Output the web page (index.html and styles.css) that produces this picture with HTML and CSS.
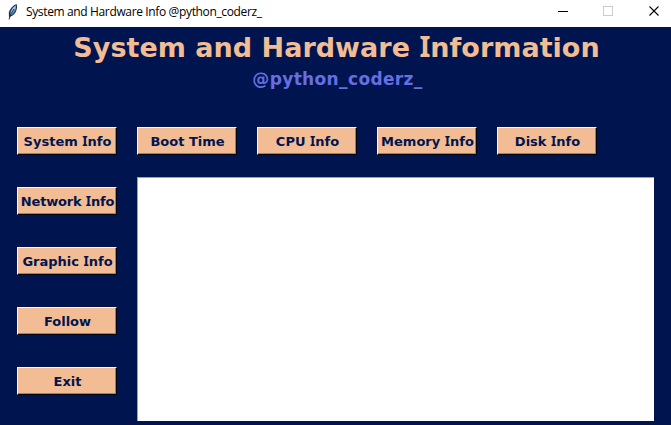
FILE: index.html
```html
<!DOCTYPE html>
<html lang="en">
<head>
<meta charset="utf-8">
<title>System and Hardware Info</title>
<link rel="stylesheet" href="styles.css">
</head>
<body>
<div class="window">
  <header class="titlebar">
    <svg class="feather" width="12" height="18" viewBox="0 0 12 18">
      <path d="M2 14.500 L1.800 9.500 Q4 3 9.500 1 Q10.800 4 9 8.500 Q7 12.500 3.500 13.500 Z" fill="#27303f"/>
      <path d="M3 12 Q3.500 5.500 9 2 Q9.600 6 7.500 9 L5 12 Z" fill="#4a8fd2"/>
      <path d="M3.500 10 Q4.500 5.500 8.500 2.800 L8.500 5 Q6.500 8 4.500 10.500 Z" fill="#9ccaf4"/>
      <path d="M2 16.500 Q3 11 7 6" fill="none" stroke="#17202e" stroke-width=".9"/>
    </svg>
    <span class="caption">System and Hardware Info @python_coderz_</span>
    <svg class="controls" width="113" height="11" viewBox="0 0 113 11" shape-rendering="crispEdges">
      <path d="M0 5.500H10" stroke="#000"/>
      <rect x="45.500" y=".5" width="9" height="9" fill="none" stroke="#ccc"/>
      <path d="M91.500 .5L100.500 9.500M100.500 .5L91.500 9.500" stroke="#000" stroke-width="1.100" shape-rendering="auto"/>
    </svg>
  </header>
  <main class="client">
    <h1 class="heading">System and Hardware <span class="cap-i">I</span>nformation</h1>
    <p class="handle">@python_coderz_</p>
    <div class="grid">
      <button class="btn">System <span class="cap-i">I</span>nfo</button>
      <button class="btn">Boot Time</button>
      <button class="btn">CPU <span class="cap-i">I</span>nfo</button>
      <button class="btn">Memory <span class="cap-i">I</span>nfo</button>
      <button class="btn">Disk <span class="cap-i">I</span>nfo</button>
      <button class="btn tight">Network <span class="cap-i">I</span>nfo</button>
      <div class="output"></div>
      <button class="btn">Graphic <span class="cap-i">I</span>nfo</button>
      <button class="btn">Follow</button>
      <button class="btn">Exit</button>
    </div>
  </main>
</div>
</body>
</html>
```
FILE: styles.css
```css
* { box-sizing: border-box; }
body { margin: 0; }
.window {
  width: 671px;
  height: 425px;
  overflow: hidden;
  display: flex;
  flex-direction: column;
  background: #00154f;
}
.titlebar {
  height: 27px;
  flex: none;
  display: flex;
  align-items: center;
  background: #fff;
  padding: 0 0 4px 7px;
}
.feather { flex: none; }
.caption {
  margin: 1px 0 0 7px;
  font: 12px/16px "Open Sans", sans-serif;
  letter-spacing: -0.36px;
  color: #000;
  white-space: nowrap;
}
.controls { margin-left: auto; }
.client {
  flex: 1;
  font-family: "DejaVu Sans", sans-serif;
  font-weight: 700;
}
.heading {
  margin: 0;
  padding: 4px 0 0 2px;
  font-size: 27px;
  line-height: 34px;
  letter-spacing: 0.02px;
  text-align: center;
  white-space: nowrap;
  color: #f2bc94;
}
.handle {
  margin: 3px 0 0;
  padding-left: 4px;
  font-size: 17px;
  line-height: 22px;
  letter-spacing: 0.36px;
  text-align: center;
  color: #676ee2;
}
.cap-i {
  font-family: "Noto Sans", sans-serif;
  font-size: 1.04em;
  line-height: 0;
}
.grid {
  display: grid;
  grid-template-columns: repeat(5, 100px);
  grid-auto-rows: 28px;
  gap: 32px 20px;
  padding: 37px 0 0 17px;
}
.btn {
  height: 28px;
  padding: 2px 0 0 1px;
  border: 1px solid;
  border-color: #ffffc8 #000 #000 #ffffc8;
  box-shadow: inset -1px -1px #a08068;
  border-radius: 0;
  background: #f2bc94;
  color: #00154f;
  font: 700 13px/24px "DejaVu Sans", sans-serif;
  text-align: center;
  white-space: nowrap;
}
.tight { letter-spacing: -0.18px; }
.output {
  grid-column: 2 / 6;
  grid-row: 2 / 6;
  width: 517px;
  height: 244px;
  margin-top: -10px;
  background: #fff;
  border-top: 1px solid #a0a0a0;
  border-left: 1px solid #a0a0a0;
}
```
